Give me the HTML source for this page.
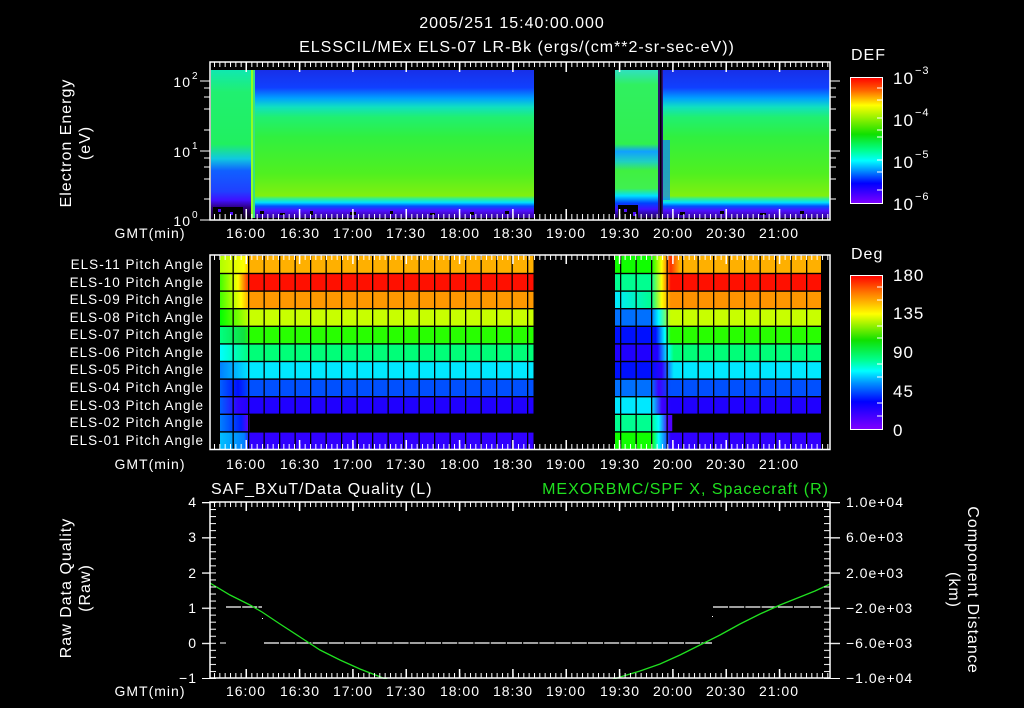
<!DOCTYPE html>
<html><head><meta charset="utf-8"><style>
html,body{margin:0;padding:0;background:#000;width:1024px;height:708px;overflow:hidden}
svg{display:block}
text{font-family:"Liberation Sans",sans-serif;fill:#fff;letter-spacing:1px}
</style></head><body>
<svg width="1024" height="708" viewBox="0 0 1024 708" xmlns="http://www.w3.org/2000/svg">
<defs>
<linearGradient id="segA" x1="0" y1="0" x2="0" y2="1">
<stop offset="0" stop-color="#10e8b0"/><stop offset="0.15" stop-color="#20f070"/><stop offset="0.5" stop-color="#20f060"/><stop offset="0.6" stop-color="#10c8e0"/><stop offset="0.68" stop-color="#1060ff"/><stop offset="0.82" stop-color="#2040ff"/><stop offset="0.88" stop-color="#4010ff"/><stop offset="0.93" stop-color="#300080"/><stop offset="1" stop-color="#100020"/>
</linearGradient>
<linearGradient id="segB" x1="0" y1="0" x2="0" y2="1">
<stop offset="0" stop-color="#1830e8"/><stop offset="0.12" stop-color="#1040ff"/><stop offset="0.19" stop-color="#00a0ff"/><stop offset="0.25" stop-color="#10e0c0"/><stop offset="0.32" stop-color="#20f070"/><stop offset="0.45" stop-color="#30f040"/><stop offset="0.7" stop-color="#50f020"/><stop offset="0.85" stop-color="#80f010"/><stop offset="0.87" stop-color="#30f090"/><stop offset="0.895" stop-color="#00e0ff"/><stop offset="0.92" stop-color="#0050ff"/><stop offset="0.95" stop-color="#5010ff"/><stop offset="1" stop-color="#300090"/>
</linearGradient>
<linearGradient id="segC" x1="0" y1="0" x2="0" y2="1">
<stop offset="0" stop-color="#30e0c0"/><stop offset="0.1" stop-color="#30f060"/><stop offset="0.5" stop-color="#30f050"/><stop offset="0.55" stop-color="#10a0ff"/><stop offset="0.62" stop-color="#20d0c0"/><stop offset="0.68" stop-color="#40f040"/><stop offset="0.8" stop-color="#40f050"/><stop offset="0.85" stop-color="#00e0ff"/><stop offset="0.9" stop-color="#0040ff"/><stop offset="0.94" stop-color="#4010ff"/><stop offset="1" stop-color="#200050"/>
</linearGradient>
<linearGradient id="cb1" x1="0" y1="0" x2="0" y2="1">
<stop offset="0" stop-color="#ff0000"/><stop offset="0.1" stop-color="#ff6000"/><stop offset="0.22" stop-color="#ffff00"/><stop offset="0.45" stop-color="#10e000"/><stop offset="0.58" stop-color="#00ff90"/><stop offset="0.66" stop-color="#00ffff"/><stop offset="0.74" stop-color="#0090ff"/><stop offset="0.84" stop-color="#0000ff"/><stop offset="1" stop-color="#8000ff"/>
</linearGradient>
<pattern id="tminD" x="246" y="0" width="5.333" height="708" patternUnits="userSpaceOnUse"><rect x="0" y="0" width="1" height="708" fill="#fff"/></pattern>
<pattern id="tmaj" x="245.5" y="0" width="53.33" height="708" patternUnits="userSpaceOnUse"><rect x="0" y="0" width="1.5" height="708" fill="#fff"/></pattern>
<pattern id="vcol" x="232.5" y="0" width="15.5" height="708" patternUnits="userSpaceOnUse"><rect x="0" y="0" width="1.3" height="708" fill="#000"/></pattern>
<pattern id="yminB" x="0" y="502" width="20" height="7.04" patternUnits="userSpaceOnUse"><rect x="0" y="0" width="20" height="1" fill="#fff"/></pattern>
<pattern id="ymajB" x="0" y="502" width="20" height="35.2" patternUnits="userSpaceOnUse"><rect x="0" y="0" width="20" height="1.3" fill="#fff"/></pattern>
</defs>

<text x="512" y="28" font-size="16" text-anchor="middle">2005/251 15:40:00.000</text>
<text x="517" y="52" font-size="16" text-anchor="middle">ELSSCIL/MEx ELS-07 LR-Bk  (ergs/(cm**2-sr-sec-eV))</text>

<rect x="211" y="70" width="40" height="148" fill="url(#segA)"/>
<rect x="251" y="70" width="4" height="148" fill="#90ff20"/>
<rect x="255" y="70" width="279" height="148" fill="url(#segB)"/>
<rect x="253" y="70" width="2" height="148" fill="#00d0c0" opacity="0.6"/>
<rect x="615" y="70" width="43" height="148" fill="url(#segC)"/>
<rect x="658" y="70" width="5" height="148" fill="#301070"/>
<rect x="660" y="70" width="1.5" height="148" fill="#000"/>
<rect x="663" y="70" width="167" height="148" fill="url(#segB)"/>
<rect x="663" y="140" width="7" height="60" fill="#1080ff" opacity="0.7"/>
<g fill="#000">
<rect x="213" y="207" width="30" height="11"/><rect x="260" y="211" width="4" height="3"/><rect x="280" y="213" width="5" height="2"/><rect x="310" y="211" width="3" height="4"/><rect x="350" y="212" width="6" height="3"/><rect x="390" y="211" width="3" height="3"/><rect x="430" y="213" width="5" height="2"/><rect x="470" y="212" width="4" height="3"/><rect x="505" y="211" width="4" height="3"/><rect x="618" y="205" width="20" height="13"/><rect x="680" y="212" width="5" height="3"/><rect x="720" y="211" width="4" height="3"/><rect x="760" y="213" width="6" height="2"/><rect x="800" y="211" width="4" height="3"/>
</g>
<g fill="#5010ff"><rect x="218" y="209" width="3" height="3"/><rect x="230" y="212" width="3" height="3"/><rect x="624" y="209" width="3" height="3"/><rect x="633" y="212" width="3" height="4"/></g>

<rect x="210" y="62" width="620" height="158" fill="none" stroke="#fff" stroke-width="1.5"/>
<rect x="210" y="62" width="620" height="5" fill="url(#tminD)"/>
<rect x="210" y="62" width="620" height="10" fill="url(#tmaj)"/>
<rect x="210" y="214" width="620" height="6" fill="url(#tminD)"/>
<rect x="210" y="209" width="620" height="11" fill="url(#tmaj)"/>
<g stroke="#fff" stroke-width="1">
<line x1="200" y1="81" x2="210" y2="81"/><line x1="200" y1="151" x2="210" y2="151"/><line x1="200" y1="220" x2="210" y2="220"/>
<line x1="204" y1="88" x2="210" y2="88"/><line x1="204" y1="97" x2="210" y2="97"/><line x1="204" y1="109" x2="210" y2="109"/><line x1="204" y1="130" x2="210" y2="130"/>
<line x1="204" y1="158" x2="210" y2="158"/><line x1="204" y1="167" x2="210" y2="167"/><line x1="204" y1="179" x2="210" y2="179"/><line x1="204" y1="199" x2="210" y2="199"/>
<line x1="830" y1="81" x2="840" y2="81"/><line x1="830" y1="151" x2="840" y2="151"/>
<line x1="830" y1="88" x2="836" y2="88"/><line x1="830" y1="97" x2="836" y2="97"/><line x1="830" y1="109" x2="836" y2="109"/><line x1="830" y1="130" x2="836" y2="130"/>
<line x1="830" y1="158" x2="836" y2="158"/><line x1="830" y1="167" x2="836" y2="167"/><line x1="830" y1="179" x2="836" y2="179"/><line x1="830" y1="199" x2="836" y2="199"/>
</g>
<g font-size="14">
<text x="191" y="87" text-anchor="end">10</text><text x="192" y="79" font-size="10">2</text>
<text x="191" y="157" text-anchor="end">10</text><text x="192" y="149" font-size="10">1</text>
<text x="191" y="226" text-anchor="end">10</text><text x="192" y="218" font-size="10">0</text>
</g>
<text transform="translate(71,143) rotate(-90)" font-size="16" text-anchor="middle">Electron Energy</text>
<text transform="translate(90,143) rotate(-90)" font-size="16" text-anchor="middle">(eV)</text>

<text x="851" y="60" font-size="16">DEF</text>
<rect x="850.5" y="77.5" width="32" height="126" fill="url(#cb1)" stroke="#fff" stroke-width="1"/>
<g stroke="#fff"><line x1="877" y1="88" x2="882" y2="88"/><line x1="877" y1="100" x2="882" y2="100"/><line x1="877" y1="118" x2="882" y2="118"/><line x1="877" y1="130" x2="882" y2="130"/><line x1="877" y1="137" x2="882" y2="137"/><line x1="877" y1="160" x2="882" y2="160"/><line x1="877" y1="172" x2="882" y2="172"/><line x1="877" y1="190" x2="882" y2="190"/></g>
<g font-size="17">
<text x="893" y="84">10</text><text x="915" y="74" font-size="11">−3</text>
<text x="893" y="126">10</text><text x="915" y="116" font-size="11">−4</text>
<text x="893" y="168">10</text><text x="915" y="158" font-size="11">−5</text>
<text x="893" y="210">10</text><text x="915" y="200" font-size="11">−6</text>
</g>

<g font-size="14" text-anchor="middle">
<text x="150" y="238">GMT(min)</text>
<text x="246" y="238">16:00</text><text x="300" y="238">16:30</text><text x="353" y="238">17:00</text><text x="406" y="238">17:30</text><text x="460" y="238">18:00</text><text x="513" y="238">18:30</text><text x="566" y="238">19:00</text><text x="620" y="238">19:30</text><text x="673" y="238">20:00</text><text x="726" y="238">20:30</text><text x="779" y="238">21:00</text>
</g>

<defs>
<linearGradient id="r11" x1="220" x2="821" y1="0" y2="0" gradientUnits="userSpaceOnUse"><stop offset="0" stop-color="#b0ff00"/><stop offset="0.04" stop-color="#ffff00"/><stop offset="0.05" stop-color="#ffb000"/><stop offset="0.522" stop-color="#ffb000"/><stop offset="0.522" stop-color="#000"/><stop offset="0.657" stop-color="#000"/><stop offset="0.657" stop-color="#10ff00"/><stop offset="0.718" stop-color="#10ff00"/><stop offset="0.735" stop-color="#ffff00"/><stop offset="0.75" stop-color="#ff3000"/><stop offset="0.765" stop-color="#ffb000"/><stop offset="1" stop-color="#ffb000"/></linearGradient>
<linearGradient id="r10" x1="220" x2="821" y1="0" y2="0" gradientUnits="userSpaceOnUse"><stop offset="0" stop-color="#40ff00"/><stop offset="0.03" stop-color="#ffff00"/><stop offset="0.05" stop-color="#ff1000"/><stop offset="0.522" stop-color="#ff1000"/><stop offset="0.522" stop-color="#000"/><stop offset="0.657" stop-color="#000"/><stop offset="0.657" stop-color="#00ff90"/><stop offset="0.718" stop-color="#00ff90"/><stop offset="0.735" stop-color="#ffff00"/><stop offset="0.75" stop-color="#ff1000"/><stop offset="1" stop-color="#ff1000"/></linearGradient>
<linearGradient id="r09" x1="220" x2="821" y1="0" y2="0" gradientUnits="userSpaceOnUse"><stop offset="0" stop-color="#40ff00"/><stop offset="0.035" stop-color="#ffff00"/><stop offset="0.05" stop-color="#ff9800"/><stop offset="0.522" stop-color="#ff9800"/><stop offset="0.522" stop-color="#000"/><stop offset="0.657" stop-color="#000"/><stop offset="0.657" stop-color="#00e8ff"/><stop offset="0.718" stop-color="#00ff90"/><stop offset="0.735" stop-color="#ffff00"/><stop offset="0.75" stop-color="#ff9000"/><stop offset="1" stop-color="#ff9800"/></linearGradient>
<linearGradient id="r08" x1="220" x2="821" y1="0" y2="0" gradientUnits="userSpaceOnUse"><stop offset="0" stop-color="#00ff00"/><stop offset="0.05" stop-color="#c8ff00"/><stop offset="0.522" stop-color="#c8ff00"/><stop offset="0.522" stop-color="#000"/><stop offset="0.657" stop-color="#000"/><stop offset="0.657" stop-color="#0070ff"/><stop offset="0.718" stop-color="#0070ff"/><stop offset="0.73" stop-color="#00ffff"/><stop offset="0.75" stop-color="#c8ff00"/><stop offset="1" stop-color="#c8ff00"/></linearGradient>
<linearGradient id="r07" x1="220" x2="821" y1="0" y2="0" gradientUnits="userSpaceOnUse"><stop offset="0" stop-color="#00ff80"/><stop offset="0.04" stop-color="#10e040"/><stop offset="0.05" stop-color="#28ff00"/><stop offset="0.522" stop-color="#28ff00"/><stop offset="0.522" stop-color="#000"/><stop offset="0.657" stop-color="#000"/><stop offset="0.657" stop-color="#0010ff"/><stop offset="0.725" stop-color="#0010ff"/><stop offset="0.74" stop-color="#00ffff"/><stop offset="0.75" stop-color="#28ff00"/><stop offset="1" stop-color="#28ff00"/></linearGradient>
<linearGradient id="r06" x1="220" x2="821" y1="0" y2="0" gradientUnits="userSpaceOnUse"><stop offset="0" stop-color="#00ffff"/><stop offset="0.05" stop-color="#00ff78"/><stop offset="0.522" stop-color="#00ff78"/><stop offset="0.522" stop-color="#000"/><stop offset="0.657" stop-color="#000"/><stop offset="0.657" stop-color="#2000ff"/><stop offset="0.728" stop-color="#2000ff"/><stop offset="0.745" stop-color="#00ffff"/><stop offset="0.755" stop-color="#00ff78"/><stop offset="1" stop-color="#00ff78"/></linearGradient>
<linearGradient id="r05" x1="220" x2="821" y1="0" y2="0" gradientUnits="userSpaceOnUse"><stop offset="0" stop-color="#0080ff"/><stop offset="0.05" stop-color="#00e8ff"/><stop offset="0.522" stop-color="#00e8ff"/><stop offset="0.522" stop-color="#000"/><stop offset="0.657" stop-color="#000"/><stop offset="0.657" stop-color="#0010ff"/><stop offset="0.718" stop-color="#0010ff"/><stop offset="0.735" stop-color="#3000ff"/><stop offset="0.755" stop-color="#00e8ff"/><stop offset="1" stop-color="#00e8ff"/></linearGradient>
<linearGradient id="r04" x1="220" x2="821" y1="0" y2="0" gradientUnits="userSpaceOnUse"><stop offset="0" stop-color="#0060ff"/><stop offset="0.03" stop-color="#0010ff"/><stop offset="0.05" stop-color="#0050ff"/><stop offset="0.522" stop-color="#0050ff"/><stop offset="0.522" stop-color="#000"/><stop offset="0.657" stop-color="#000"/><stop offset="0.657" stop-color="#0070ff"/><stop offset="0.718" stop-color="#0070ff"/><stop offset="0.73" stop-color="#4000ff"/><stop offset="0.75" stop-color="#0050ff"/><stop offset="1" stop-color="#0050ff"/></linearGradient>
<linearGradient id="r03" x1="220" x2="821" y1="0" y2="0" gradientUnits="userSpaceOnUse"><stop offset="0" stop-color="#0060ff"/><stop offset="0.03" stop-color="#3000ff"/><stop offset="0.05" stop-color="#2000ff"/><stop offset="0.522" stop-color="#2000ff"/><stop offset="0.522" stop-color="#000"/><stop offset="0.657" stop-color="#000"/><stop offset="0.657" stop-color="#00e8ff"/><stop offset="0.718" stop-color="#00e8ff"/><stop offset="0.735" stop-color="#4000ff"/><stop offset="0.75" stop-color="#2000ff"/><stop offset="1" stop-color="#2000ff"/></linearGradient>
<linearGradient id="r02" x1="220" x2="821" y1="0" y2="0" gradientUnits="userSpaceOnUse"><stop offset="0" stop-color="#0080ff"/><stop offset="0.035" stop-color="#0020ff"/><stop offset="0.048" stop-color="#6000ff"/><stop offset="0.05" stop-color="#000"/><stop offset="0.657" stop-color="#000"/><stop offset="0.657" stop-color="#00ff90"/><stop offset="0.718" stop-color="#00ff90"/><stop offset="0.73" stop-color="#00ffff"/><stop offset="0.745" stop-color="#5000ff"/><stop offset="0.752" stop-color="#5000ff"/><stop offset="0.753" stop-color="#000"/><stop offset="1" stop-color="#000"/></linearGradient>
<linearGradient id="r01" x1="220" x2="821" y1="0" y2="0" gradientUnits="userSpaceOnUse"><stop offset="0" stop-color="#00c0ff"/><stop offset="0.04" stop-color="#0080ff"/><stop offset="0.05" stop-color="#3000ff"/><stop offset="0.522" stop-color="#3000ff"/><stop offset="0.522" stop-color="#000"/><stop offset="0.657" stop-color="#000"/><stop offset="0.657" stop-color="#10ff00"/><stop offset="0.718" stop-color="#10ff00"/><stop offset="0.73" stop-color="#00ffff"/><stop offset="0.75" stop-color="#3000ff"/><stop offset="1" stop-color="#3000ff"/></linearGradient>
<linearGradient id="cb2" x1="0" y1="0" x2="0" y2="1">
<stop offset="0" stop-color="#ff0000"/><stop offset="0.12" stop-color="#ff8000"/><stop offset="0.25" stop-color="#ffff00"/><stop offset="0.42" stop-color="#10e000"/><stop offset="0.55" stop-color="#00ff90"/><stop offset="0.62" stop-color="#00ffff"/><stop offset="0.7" stop-color="#0090ff"/><stop offset="0.82" stop-color="#0000ff"/><stop offset="1" stop-color="#8000ff"/>
</linearGradient>
</defs>
<rect x="220" y="256" width="601" height="17.6" fill="url(#r11)"/>
<rect x="220" y="273.6" width="601" height="17.6" fill="url(#r10)"/>
<rect x="220" y="291.2" width="601" height="17.6" fill="url(#r09)"/>
<rect x="220" y="308.8" width="601" height="17.6" fill="url(#r08)"/>
<rect x="220" y="326.4" width="601" height="17.6" fill="url(#r07)"/>
<rect x="220" y="344" width="601" height="17.6" fill="url(#r06)"/>
<rect x="220" y="361.6" width="601" height="17.6" fill="url(#r05)"/>
<rect x="220" y="379.2" width="601" height="17.6" fill="url(#r04)"/>
<rect x="220" y="396.8" width="601" height="17.6" fill="url(#r03)"/>
<rect x="220" y="414.4" width="601" height="17.6" fill="url(#r02)"/>
<rect x="220" y="432" width="601" height="17.6" fill="url(#r01)"/>
<rect x="232" y="256" width="589" height="194" fill="url(#vcol)"/>
<g fill="#000"><rect x="220" y="272.8" width="601" height="1.4"/><rect x="220" y="290.4" width="601" height="1.4"/><rect x="220" y="308" width="601" height="1.4"/><rect x="220" y="325.6" width="601" height="1.4"/><rect x="220" y="343.2" width="601" height="1.4"/><rect x="220" y="360.8" width="601" height="1.4"/><rect x="220" y="378.4" width="601" height="1.4"/><rect x="220" y="396" width="601" height="1.4"/><rect x="220" y="413.6" width="601" height="1.4"/><rect x="220" y="431.2" width="601" height="1.4"/><rect x="534" y="256" width="81" height="194"/></g>
<rect x="210" y="255" width="620" height="194.5" fill="none" stroke="#fff" stroke-width="1.5"/>
<rect x="210" y="255" width="620" height="5" fill="url(#tminD)"/>
<rect x="210" y="255" width="620" height="9" fill="url(#tmaj)"/>
<rect x="210" y="444" width="620" height="6" fill="url(#tminD)"/>
<rect x="210" y="440" width="620" height="10" fill="url(#tmaj)"/>
<g font-size="13.5" text-anchor="end">
<text x="204" y="269">ELS-11 Pitch Angle</text>
<text x="204" y="287">ELS-10 Pitch Angle</text>
<text x="204" y="304">ELS-09 Pitch Angle</text>
<text x="204" y="322">ELS-08 Pitch Angle</text>
<text x="204" y="339">ELS-07 Pitch Angle</text>
<text x="204" y="357">ELS-06 Pitch Angle</text>
<text x="204" y="374">ELS-05 Pitch Angle</text>
<text x="204" y="392">ELS-04 Pitch Angle</text>
<text x="204" y="410">ELS-03 Pitch Angle</text>
<text x="204" y="427">ELS-02 Pitch Angle</text>
<text x="204" y="445">ELS-01 Pitch Angle</text>
</g>
<text x="851" y="259" font-size="16">Deg</text>
<rect x="850.5" y="275.5" width="32" height="154" fill="url(#cb2)" stroke="#fff" stroke-width="1"/>
<g stroke="#fff"><line x1="877" y1="287" x2="882" y2="287"/><line x1="877" y1="300" x2="882" y2="300"/><line x1="877" y1="326" x2="882" y2="326"/><line x1="877" y1="338" x2="882" y2="338"/><line x1="877" y1="364" x2="882" y2="364"/><line x1="877" y1="377" x2="882" y2="377"/><line x1="877" y1="403" x2="882" y2="403"/><line x1="877" y1="416" x2="882" y2="416"/></g>
<g font-size="17">
<text x="893" y="281">180</text><text x="893" y="319">135</text><text x="893" y="358">90</text><text x="893" y="397">45</text><text x="893" y="436">0</text>
</g>
<g font-size="14" text-anchor="middle">
<text x="150" y="469">GMT(min)</text>
<text x="246" y="469">16:00</text><text x="300" y="469">16:30</text><text x="353" y="469">17:00</text><text x="406" y="469">17:30</text><text x="460" y="469">18:00</text><text x="513" y="469">18:30</text><text x="566" y="469">19:00</text><text x="620" y="469">19:30</text><text x="673" y="469">20:00</text><text x="726" y="469">20:30</text><text x="779" y="469">21:00</text>
</g>

<text x="211" y="494" font-size="16">SAF_BXuT/Data Quality (L)</text>
<text x="829" y="494" font-size="16" text-anchor="end" style="fill:#20e020">MEXORBMC/SPF X, Spacecraft (R)</text>
<g stroke="#fff" stroke-width="1.2" stroke-dasharray="15 1.2">
<line x1="226" y1="607" x2="262" y2="607"/>
<line x1="264" y1="643" x2="712" y2="643"/>
<line x1="713" y1="607" x2="821" y2="607"/>
</g>
<line x1="220" y1="643" x2="226" y2="643" stroke="#fff"/>
<rect x="262" y="618" width="1" height="1" fill="#fff"/><rect x="712" y="616" width="1" height="1" fill="#fff"/>
<svg x="210" y="502" width="620" height="177" viewBox="210 502 620 177" overflow="hidden">
<polyline fill="none" stroke="#20e020" stroke-width="1.3" points="210,583 230,595 250,605 262,612 280,624 300,637 320,650 340,660 360,669 383,678 400,684 500,700 600,684 617,678 640,671 660,664 680,655 700,645 720,635 740,624 760,614 780,605 800,597 815,591 830,584"/>
</svg>
<rect x="210" y="502" width="620" height="176" fill="none" stroke="#fff" stroke-width="1.5"/>
<rect x="210" y="502" width="620" height="5" fill="url(#tminD)"/>
<rect x="210" y="502" width="620" height="9" fill="url(#tmaj)"/>
<rect x="210" y="673" width="620" height="5" fill="url(#tminD)"/>
<rect x="210" y="669" width="620" height="9" fill="url(#tmaj)"/>
<rect x="210" y="502" width="6" height="177" fill="url(#yminB)"/>
<rect x="202" y="502" width="8" height="177" fill="url(#ymajB)"/>
<rect x="824" y="502" width="6" height="177" fill="url(#yminB)"/>
<rect x="830" y="502" width="10" height="177" fill="url(#ymajB)"/>
<g font-size="14" text-anchor="end">
<text x="197" y="507">4</text><text x="197" y="542">3</text><text x="197" y="578">2</text><text x="197" y="613">1</text><text x="197" y="648">0</text><text x="197" y="683">−1</text>
</g>
<g font-size="14">
<text x="846" y="507">1.0e+04</text><text x="846" y="542">6.0e+03</text><text x="846" y="578">2.0e+03</text><text x="846" y="613">−2.0e+03</text><text x="846" y="648">−6.0e+03</text><text x="846" y="683">−1.0e+04</text>
</g>
<text transform="translate(71,588) rotate(-90)" font-size="16" text-anchor="middle">Raw Data Quality</text>
<text transform="translate(90,588) rotate(-90)" font-size="16" text-anchor="middle">(Raw)</text>
<text transform="translate(968,590) rotate(90)" font-size="16" text-anchor="middle">Component Distance</text>
<text transform="translate(949,590) rotate(90)" font-size="16" text-anchor="middle">(km)</text>
<g font-size="14" text-anchor="middle">
<text x="150" y="696">GMT(min)</text>
<text x="246" y="696">16:00</text><text x="300" y="696">16:30</text><text x="353" y="696">17:00</text><text x="406" y="696">17:30</text><text x="460" y="696">18:00</text><text x="513" y="696">18:30</text><text x="566" y="696">19:00</text><text x="620" y="696">19:30</text><text x="673" y="696">20:00</text><text x="726" y="696">20:30</text><text x="779" y="696">21:00</text>
</g>
</svg>
</body></html>
